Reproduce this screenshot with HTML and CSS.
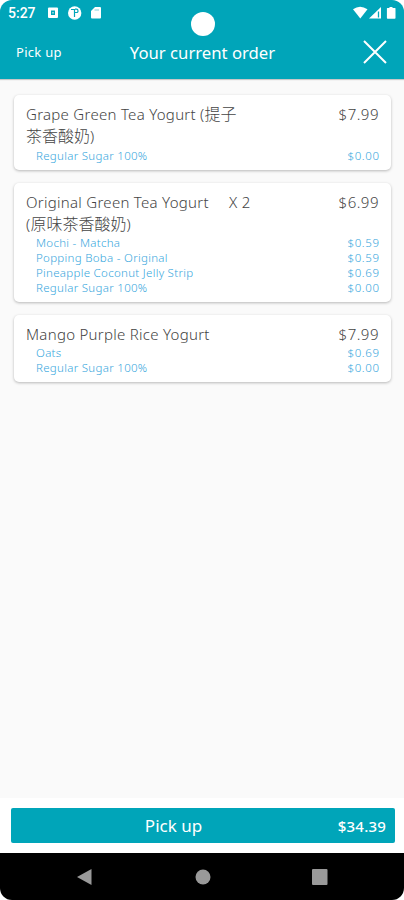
FILE: index.html
```html
<!DOCTYPE html>
<html lang="en">
<head>
  <meta charset="utf-8">
  <title>Your current order</title>
  <link rel="stylesheet" href="styles.css">
</head>
<body>
  <div class="screen">
    <div class="top">
      <div class="status-bar">
        <span class="time">5:27</span>
        <svg class="app-icons" width="56" height="14" viewBox="0 0 56 14">
          <rect x="1" y="1.500" width="10" height="10.500" rx="1" fill="#fff"/>
          <rect x="4" y="4.500" width="4" height="4.500" fill="#00a5b9"/>
          <rect x="5.500" y="6" width="1" height="1.500" fill="#fff"/>
          <circle cx="27.700" cy="7" r="6.700" fill="#fff"/>
          <path d="M24 3.500h3.500V11M28 3.200h1.500q1.500 0 1.500 1.700T29.500 6.500H28" fill="none" stroke="#00a5b9" stroke-width="1.200"/>
          <path d="M48 1h5q1 0 1 1v9.500q0 1-1 1h-8q-1 0-1-1V5z" fill="#fff"/>
          <path d="M47.500 4h4.500" stroke="#00a5b9" stroke-opacity=".5" stroke-width="1"/>
        </svg>
        <svg class="system-icons" width="46" height="14" viewBox="0 0 46 14">
          <path d="M1 3.200Q8 -1.800 15.500 3.200L8.300 12.500z" fill="#fff"/>
          <path d="M17 12.500L29 1v11.500z" fill="#fff"/>
          <path d="M26.500 5.500v6" stroke="#00a5b9" stroke-width="1.300"/>
          <path d="M37.500 1h3v1H43q.5 0 .5.500v9.500q0 .8-.8.800h-7q-.8 0-.8-.800V2.500q0-.5.500-.5h2z" fill="#fff"/>
        </svg>
        <div class="camera"></div>
      </div>
      <div class="header">
        <span class="order-type">Pick up</span>
        <h1>Your current order</h1>
        <svg class="close" width="24" height="24" viewBox="0 0 24 24">
          <path d="M1 1l22 22M23 1L1 23" stroke="#fff" stroke-width="2"/>
        </svg>
      </div>
    </div>

    <div class="order-list">
      <div class="card">
        <div class="item">
          <span class="name">Grape Green Tea Yogurt (<span class="cjk">提子</span><br><span class="cjk">茶香酸奶</span>)</span>
          <span class="price">$7.99</span>
        </div>
        <div class="option option-first"><span>Regular Sugar 100%</span><span class="option-price">$0.00</span></div>
      </div>
      <div class="card">
        <div class="item">
          <span class="name">Original Green Tea Yogurt<br>(<span class="cjk">原味茶香酸奶</span>)</span>
          <span class="quantity">X 2</span>
          <span class="price">$6.99</span>
        </div>
        <div class="option"><span>Mochi - Matcha</span><span class="option-price">$0.59</span></div>
        <div class="option"><span>Popping Boba - Original</span><span class="option-price">$0.59</span></div>
        <div class="option"><span>Pineapple Coconut Jelly Strip</span><span class="option-price">$0.69</span></div>
        <div class="option"><span>Regular Sugar 100%</span><span class="option-price">$0.00</span></div>
      </div>
      <div class="card">
        <div class="item">
          <span class="name">Mango Purple Rice Yogurt</span>
          <span class="price">$7.99</span>
        </div>
        <div class="option"><span>Oats</span><span class="option-price">$0.69</span></div>
        <div class="option"><span>Regular Sugar 100%</span><span class="option-price">$0.00</span></div>
      </div>
    </div>

    <div class="footer">
      <button class="checkout">
        <span class="label">Pick up</span>
        <span class="total">$34.39</span>
      </button>
    </div>

    <div class="nav-bar">
      <svg width="16" height="18" viewBox="0 0 16 18"><path d="M0 9L14.500 1v16z" fill="#999"/></svg>
      <svg width="16" height="16" viewBox="0 0 16 16"><circle cx="8" cy="8" r="7.500" fill="#999"/></svg>
      <svg width="16" height="16" viewBox="0 0 16 16"><rect width="15.500" height="16" rx="1" fill="#999"/></svg>
    </div>
  </div>
</body>
</html>
```
FILE: styles.css
```css
* {
  box-sizing: border-box;
}
body {
  margin: 0;
  background-color: #fff;
  font-family: "Noto Sans", "Noto Sans CJK SC", sans-serif;
}
.screen {
  display: flex;
  flex-direction: column;
  width: 404px;
  height: 900px;
  border-radius: 12px;
  overflow: hidden;
  background-color: #fafafa;
}
.top {
  height: 79px;
  background-color: #00a5b9;
  color: #fff;
  box-shadow: 0 1px 1px rgba(0, 0, 0, 0.2);
}
.status-bar {
  position: relative;
  display: flex;
  align-items: center;
  height: 26px;
  padding: 0 6px 0 8px;
}
.time {
  width: 39px;
  font-family: Roboto, sans-serif;
  font-size: 14px;
  font-weight: 500;
}
.system-icons {
  margin-left: auto;
}
.camera {
  position: absolute;
  left: 191px;
  top: 12px;
  width: 24px;
  height: 24px;
  border-radius: 50%;
  background-color: #fff;
}
.header {
  display: grid;
  grid-template-columns: 91px 1fr 89px;
  align-items: center;
  height: 52px;
  padding: 0 17px 0 16px;
}
.order-type {
  font-size: 13px;
  letter-spacing: 0.3px;
}
h1 {
  margin: 0;
  font-size: 16.7px;
  font-weight: 400;
  text-align: center;
  white-space: nowrap;
}
.close {
  justify-self: end;
}
.order-list {
  flex: 1;
  padding: 16px 13px 0 14px;
}
.card {
  margin-bottom: 13px;
  padding: 8px 12px 7px;
  border-radius: 5px;
  background-color: #fff;
  box-shadow: 0 1px 3px rgba(0, 0, 0, 0.27);
}
.item {
  display: flex;
  color: #444;
  font-size: 15px;
  font-weight: 300;
  letter-spacing: 0.28px;
  line-height: 22px;
}
.name {
  width: 203px;
  white-space: nowrap;
}
.cjk {
  font-size: 16px;
  letter-spacing: 0;
  line-height: 20px;
}
.price {
  margin-left: auto;
  letter-spacing: 0.5px;
}
.option {
  display: flex;
  justify-content: space-between;
  padding-left: 10px;
  color: #36a6dd;
  font-size: 11.5px;
  font-weight: 300;
  letter-spacing: 0.3px;
  line-height: 15px;
}
.option-first {
  padding-top: 1px;
}
.option-price {
  letter-spacing: 0.6px;
  margin-right: -0.6px;
}
.footer {
  height: 55px;
  padding: 10px 9px 10px 11px;
  background-color: #fff;
}
.checkout {
  display: grid;
  grid-template-columns: 1fr 60px;
  align-items: center;
  width: 100%;
  height: 35px;
  padding: 0 9px 0 10px;
  border: none;
  border-radius: 2px;
  background-color: #00a5b9;
  color: #fff;
  font-family: inherit;
}
.label {
  font-size: 17px;
}
.total {
  font-size: 15px;
  font-weight: 500;
  letter-spacing: 0.2px;
  text-align: right;
}
.nav-bar {
  display: flex;
  align-items: center;
  justify-content: space-between;
  height: 47px;
  padding: 0 76px 0 77px;
  background-color: #000;
}
```
